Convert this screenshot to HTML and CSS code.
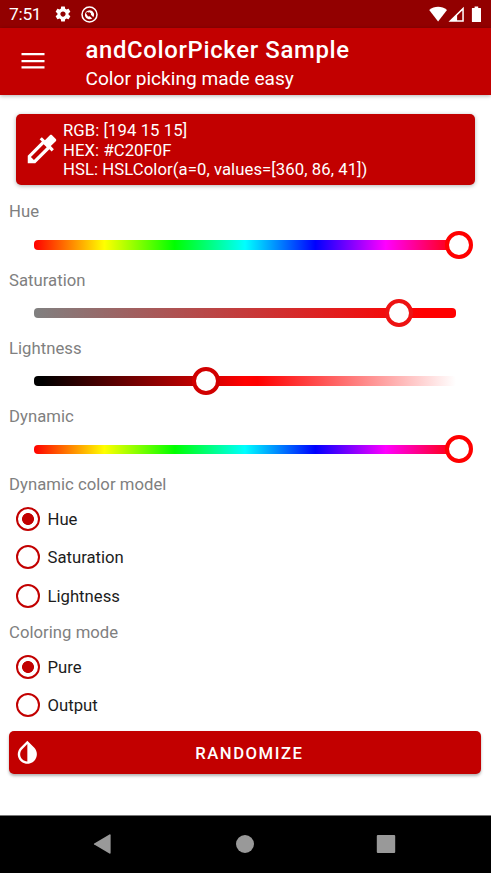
FILE: index.html
```html
<!DOCTYPE html>
<html lang="en">
<head>
<meta charset="utf-8">
<title>andColorPicker Sample</title>
<link rel="stylesheet" href="styles.css">
</head>
<body>
<div class="statusbar">
  <span class="clock">7:51</span>
  <svg class="gear" viewBox="0 0 24 24"><path d="M19.43 12.98c.04-.32.07-.64.07-.98s-.03-.66-.07-.98l2.11-1.65c.19-.15.24-.42.12-.64l-2-3.46c-.12-.22-.39-.3-.61-.22l-2.49 1c-.52-.4-1.08-.73-1.69-.98l-.38-2.65C14.46 2.18 14.25 2 14 2h-4c-.25 0-.46.18-.49.42l-.38 2.65c-.61.25-1.17.59-1.69.98l-2.49-1c-.23-.09-.49 0-.61.22l-2 3.46c-.13.22-.07.49.12.64l2.11 1.65c-.04.32-.07.65-.07.98s.03.66.07.98l-2.11 1.65c-.19.15-.24.42-.12.64l2 3.46c.12.22.39.3.61.22l2.49-1c.52.4 1.08.73 1.69.98l.38 2.65c.03.24.24.42.49.42h4c.25 0 .46-.18.49-.42l.38-2.65c.61-.25 1.17-.59 1.69-.98l2.49 1c.23.09.49 0 .61-.22l2-3.46c.12-.22.07-.49-.12-.64l-2.11-1.65zM12 15.5c-1.93 0-3.5-1.57-3.5-3.5s1.57-3.5 3.5-3.5 3.5 1.57 3.5 3.5-1.57 3.5-3.5 3.5z"/></svg>
  <svg class="ring" viewBox="0 0 17 17"><circle cx="8.5" cy="8.5" r="7.5" fill="none" stroke="#fff" stroke-width="1.5"/><path d="M3.9 8.9A4.7 4.7 0 0 1 12.9 7.2 4.7 4.7 0 0 1 12.4 11.2L9.9 8.7 10 7.4 8.6 6.3 7.2 6.5 6 5.7 5 7.4 6.1 9.1 7 10.4 8.7 10.2 11.2 12.6A4.8 4.8 0 0 1 3.9 8.9Z"/></svg>
  <span class="spacer"></span>
  <svg class="signals" viewBox="0 0 54 18"><path d="M0.2 4.1C5.4-.3 12.8-.3 18 4.1L9.1 15.4Z"/><path fill-rule="evenodd" d="M34.8.7V15.7H19.5ZM33.3 4.4 28.1 9.6V14.3H33.3Z"/><path d="M43.3 2H45.6V.4H49.2V2H51.5Q52 2 52 2.6V15.4Q52 16 51.5 16H43.4Q42.9 16 42.9 15.4V2.6Q42.9 2 43.3 2Z"/></svg>
</div>
<header class="appbar">
  <svg class="menu" viewBox="0 0 24 18"><path d="M.5 1h23v2.3H.5zM.5 7.9h23v2.3H.5zM.5 14.3h23v2.3H.5z"/></svg>
  <div class="titles">
    <h1>andColorPicker Sample</h1>
    <p>Color picking made easy</p>
  </div>
</header>
<main>
  <section class="card">
    <svg viewBox="0 0 24 24"><path d="M20.71 5.63l-2.34-2.34c-.39-.39-1.02-.39-1.41 0l-3.12 3.12-1.93-1.91-1.41 1.41 1.42 1.42L3 16.25V21h4.75l8.92-8.92 1.42 1.42 1.41-1.41-1.92-1.92 3.12-3.12c.4-.4.4-1.03.01-1.42zM6.92 19L5 17.08l8.06-8.06 1.92 1.92L6.92 19z"/></svg>
    <div>RGB: [194 15 15]<br>HEX: #C20F0F<br>HSL: HSLColor(a=0, values=[360, 86, 41])</div>
  </section>
  <section class="picker"><h2>Hue</h2><div class="slider"><div class="track hue"></div><i class="thumb at-end"></i></div></section>
  <section class="picker"><h2>Saturation</h2><div class="slider"><div class="track saturation"></div><i class="thumb at-saturation"></i></div></section>
  <section class="picker"><h2>Lightness</h2><div class="slider"><div class="track lightness"></div><i class="thumb at-lightness"></i></div></section>
  <section class="picker"><h2>Dynamic</h2><div class="slider"><div class="track hue"></div><i class="thumb at-end"></i></div></section>
  <section class="options">
    <h2>Dynamic color model</h2>
    <div class="option"><i class="radio checked"></i><span>Hue</span></div>
    <div class="option"><i class="radio"></i><span>Saturation</span></div>
    <div class="option"><i class="radio"></i><span>Lightness</span></div>
  </section>
  <section class="options">
    <h2>Coloring mode</h2>
    <div class="option"><i class="radio checked"></i><span>Pure</span></div>
    <div class="option"><i class="radio"></i><span>Output</span></div>
  </section>
  <button class="randomize" type="button">
    <svg viewBox="0 0 24 24"><path d="M17.66 7.93L12 2.27 6.34 7.93c-3.12 3.12-3.12 8.19 0 11.31C7.9 20.8 9.95 21.58 12 21.58c2.05 0 4.1-.78 5.66-2.34 3.12-3.12 3.12-8.19 0-11.31zM12 19.59c-1.6 0-3.11-.62-4.24-1.76C6.62 16.69 6 15.19 6 13.59s.62-3.11 1.76-4.24L12 5.1v14.49z"/></svg>
    <span>RANDOMIZE</span>
  </button>
</main>
<nav class="navbar">
  <svg viewBox="0 0 20 20"><path d="M1.2 9.5 16.4.4Q17.6 0 17.6 1.2V18.8Q17.6 20 16.4 19.6L1.2 10.5Q.4 10 1.2 9.5Z"/></svg>
  <svg viewBox="0 0 20 20"><circle cx="10" cy="10" r="9"/></svg>
  <svg viewBox="0 0 20 20"><rect x=".8" y=".9" width="18.4" height="18.2" rx="1"/></svg>
</nav>
</body>
</html>
```
FILE: styles.css
```css
* { box-sizing: border-box; }
body {
  margin: 0;
  height: 873px;
  display: flex;
  flex-direction: column;
  background: #fff;
  font-family: Roboto, sans-serif;
  font-size: 16.7px;
  overflow: hidden;
}
svg { display: block; flex: none; fill: #fff; }
h1, h2, p { margin: 0; font-weight: 400; }

.statusbar {
  height: 28px;
  flex: none;
  display: flex;
  align-items: center;
  padding: 0 8.5px 0 9px;
  background: #920000;
  color: #fff;
}
.clock { width: 45px; font-size: 17.4px; line-height: 28px; letter-spacing: -.3px; }
.gear { width: 18px; height: 18px; }
.ring { width: 17px; height: 17px; margin-left: 9px; }
.spacer { flex: 1; }
.signals { width: 54px; height: 18px; margin-top: 1px; }

.appbar {
  height: 66.5px;
  flex: none;
  display: flex;
  background: #c20000;
  color: #fff;
  box-shadow: 0 1px 4px rgba(0, 0, 0, .3);
}
.menu { width: 24px; height: 18px; margin: 24px 40.5px 0 21px; }
.titles h1 { margin-top: 8px; font-size: 23.9px; line-height: 28px; font-weight: 500; letter-spacing: .65px; }
.titles p { margin-top: 3px; font-size: 19.1px; line-height: 23px; letter-spacing: .02px; }

main { flex: 1; padding: 19px 10px 0 9px; }
.card {
  height: 71.7px;
  margin: 0 6.5px 17.2px;
  padding: 7px;
  display: flex;
  align-items: center;
  background: #c20000;
  color: #fff;
  border-radius: 5px;
  line-height: 19.6px;
  letter-spacing: .07px;
  box-shadow: 0 1px 4px rgba(0, 0, 0, .3);
}
.card svg { width: 38px; height: 38px; margin-right: 2.5px; }
.card div { padding-top: 2px; }

h2 { height: 20px; line-height: 20px; font-size: 16.7px; color: #808080; letter-spacing: .03px; }
.picker { height: 68.2px; }
.slider { position: relative; height: 45px; padding: 17.7px 25.5px 0 25px; }
.track { height: 9.6px; border-radius: 4px; }
.hue { background: linear-gradient(90deg, #f00, #ff0, #0f0, #0ff, #00f, #f0f, #f00); }
.saturation { background: linear-gradient(90deg, #808080, #f00 92%); }
.lightness { background: linear-gradient(90deg, #000 2%, #f00 50%, #f00 53%, #fff); }
.thumb {
  position: absolute;
  top: 8.5px;
  width: 28px;
  height: 28px;
  border: 4px solid #f00;
  border-radius: 50%;
  background: #fff;
}
.at-end { left: 435.6px; }
.at-saturation { left: 375.6px; border-color: #ed1212; }
.at-lightness { left: 183.4px; border-color: #d10000; }

.options { margin-bottom: 7.9px; }
.options h2 { margin-bottom: 5px; }
.option { height: 38.2px; display: flex; align-items: center; color: #1c1c1c; padding-left: 7px; }
.option span { padding-top: 1px; }
.radio {
  width: 24px;
  height: 24px;
  margin-right: 7.5px;
  border: 2.2px solid #c20000;
  border-radius: 50%;
}
.checked { background: radial-gradient(circle, #c20000 5.6px, transparent 6.3px); }

.randomize {
  width: 100%;
  height: 43.5px;
  margin-top: -1.2px;
  padding: 0 24px 0 4px;
  display: flex;
  align-items: center;
  border: 0;
  border-radius: 5px;
  background: #c20000;
  color: #fff;
  font: 500 16.7px Roboto, sans-serif;
  letter-spacing: 1.5px;
  box-shadow: 0 2px 3px rgba(0, 0, 0, .3);
}
.randomize svg { width: 28.7px; height: 28.7px; }
.randomize span { flex: 1; text-align: center; padding-top: 2px; }

.navbar {
  height: 58px;
  flex: none;
  display: flex;
  justify-content: center;
  align-items: center;
  gap: 121.5px;
  padding: 0 2px 2px 0;
  background: #000;
  border-top: 1px solid #777;
}
.navbar svg { width: 20px; height: 20px; fill: #999; }
```
